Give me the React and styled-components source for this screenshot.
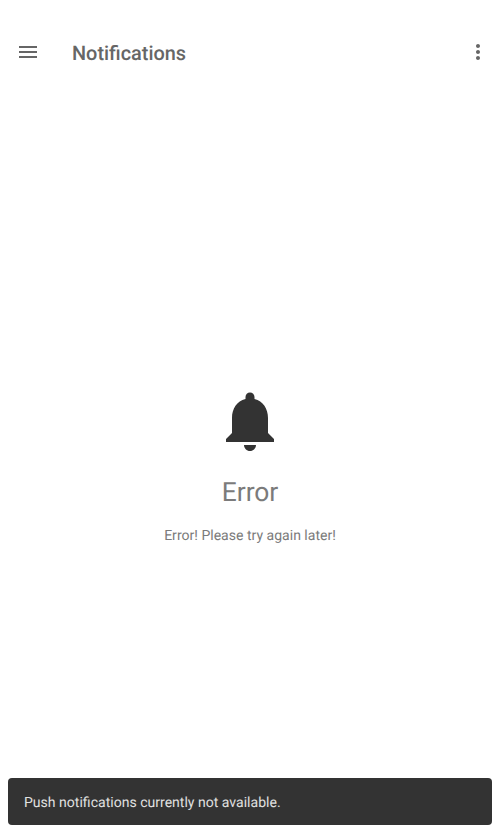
import React from "react";
import styled, { createGlobalStyle } from "styled-components";

const GlobalStyle = createGlobalStyle`
  * { box-sizing: border-box; }
  body { margin: 0; background: #fff; font-family: Roboto, sans-serif; text-rendering: geometricPrecision; }
`;

const Screen = styled.div`
  display: flex;
  flex-direction: column;
  height: 833px;
  padding-top: 24px;
  background: #fff;
  overflow: hidden;
`;

const Toolbar = styled.header`
  display: flex;
  align-items: center;
  height: 56px;
  padding: 0 10px 0 16px;
`;

const Title = styled.h1`
  flex: 1;
  margin: 4px 0 0 32px;
  font-size: 19.9px;
  font-weight: 500;
  line-height: 24px;
  color: #666;
`;

const IconButton = styled.button`
  display: flex;
  padding: 0;
  border: 0;
  background: none;
  color: #666;
`;

const Icon = styled.svg`
  display: block;
  width: ${({ $size }) => $size}px;
  height: ${({ $size }) => $size}px;
  fill: currentColor;
`;

const EmptyState = styled.main`
  flex: 1;
  display: flex;
  flex-direction: column;
  align-items: center;
  padding-top: 305px;
  color: #333;
`;

const Heading = styled.h2`
  margin: 20px 0 0;
  font-size: 26.4px;
  font-weight: 400;
  line-height: 32px;
  color: #7b7b7b;
`;

const Message = styled.p`
  margin: 17px 0 0;
  font-size: 14.06px;
  line-height: 20px;
  color: #7b7b7b;
`;

const Snackbar = styled.div`
  display: flex;
  align-items: center;
  height: 47px;
  margin: 0 8px 8px;
  padding: 3px 16px 0;
  border-radius: 4px;
  background: #333;
  color: #e0e0e0;
  font-size: 14.06px;
  line-height: 20px;
`;

export default function App() {
  return (
    <>
      <GlobalStyle />
      <Screen>
        <Toolbar>
          <IconButton aria-label="Open menu">
            <Icon $size={24} viewBox="0 0 24 24">
              <path d="M3 18h18v-2H3v2zm0-5h18v-2H3v2zm0-7v2h18V6H3z" />
            </Icon>
          </IconButton>
          <Title>Notifications</Title>
          <IconButton aria-label="More options">
            <Icon $size={24} viewBox="0 0 24 24">
              <path d="M12 8c1.1 0 2-.9 2-2s-.9-2-2-2-2 .9-2 2 .9 2 2 2zm0 2c-1.1 0-2 .9-2 2s.9 2 2 2 2-.9 2-2-.9-2-2-2zm0 6c-1.1 0-2 .9-2 2s.9 2 2 2 2-.9 2-2-.9-2-2-2z" />
            </Icon>
          </IconButton>
        </Toolbar>
        <EmptyState>
          <Icon $size={72} viewBox="0 0 24 24">
            <path d="M12 22c1.1 0 2-.9 2-2h-4c0 1.1.89 2 2 2zm6-6v-5c0-3.07-1.64-5.64-4.5-6.32V4c0-.83-.67-1.5-1.5-1.5s-1.5.67-1.5 1.5v.68C7.63 5.36 6 7.92 6 11v5l-2 2v1h16v-1l-2-2z" />
          </Icon>
          <Heading>Error</Heading>
          <Message>Error! Please try again later!</Message>
        </EmptyState>
        <Snackbar role="status">Push notifications currently not available.</Snackbar>
      </Screen>
    </>
  );
}
